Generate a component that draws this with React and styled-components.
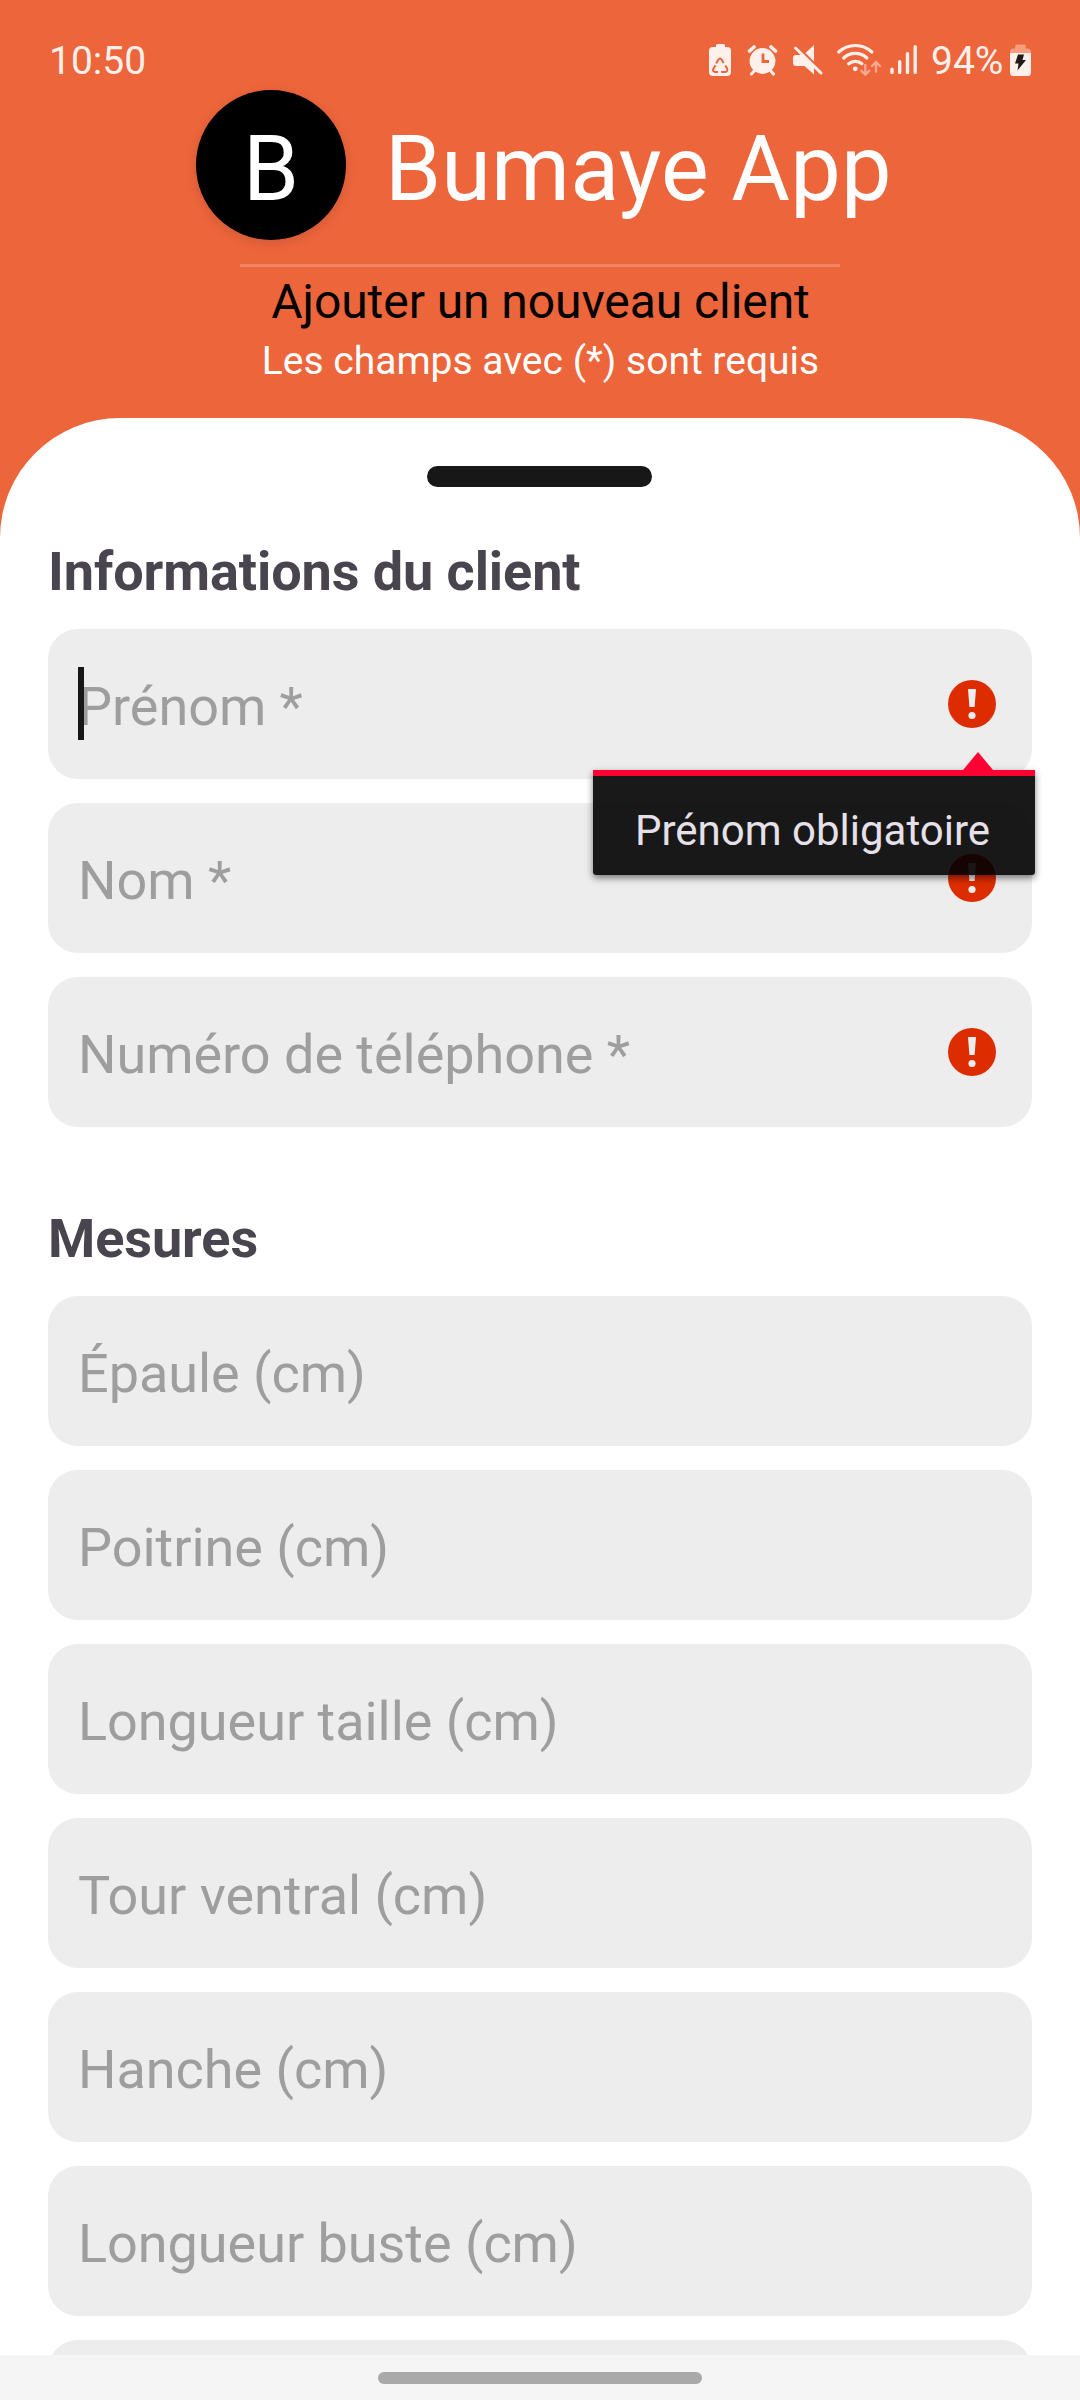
import React from "react";
import styled, { createGlobalStyle } from "styled-components";

const GlobalStyle = createGlobalStyle`
  * { box-sizing: border-box; }
  body {
    margin: 0;
    background: #ed653b;
    font-family: Roboto, "Liberation Sans", sans-serif;
  }
`;

const Screen = styled.div`
  width: 1080px;
  height: 2400px;
  display: flex;
  flex-direction: column;
  overflow: hidden;
  background: #ed653b;
`;

const StatusBar = styled.div`
  height: 90px;
  flex: none;
  display: flex;
  justify-content: space-between;
  padding: 38px 47px 0 49px;
  color: #fff0eb;
  font-size: 39px;
  line-height: 46px;
`;

const StatusIcons = styled.div`
  display: flex;
  align-items: flex-start;
`;

const StatusGlyphs = styled.svg`
  display: block;
  width: 222px;
  height: 46px;
`;

const BatteryLevel = styled.span`
  width: 73px;
  margin-left: 2px;
`;

const BatteryGlyph = styled.svg`
  display: block;
  width: 24px;
  height: 46px;
  margin-left: 5px;
`;

const Brand = styled.div`
  display: flex;
  gap: 39px;
  height: 150px;
  flex: none;
  padding-left: 196px;
`;

const Logo = styled.div`
  width: 150px;
  height: 150px;
  padding-top: 9px;
  border-radius: 50%;
  background: #000;
  box-shadow: 0 3px 12px rgba(0, 0, 0, 0.12);
  color: #fff;
  font-size: 90px;
  line-height: 142px;
  text-align: center;
`;

const Title = styled.h1`
  margin: 0;
  padding-top: 9px;
  color: #fff;
  font-size: 90px;
  font-weight: 400;
  letter-spacing: 0.2px;
  line-height: 142px;
  white-space: nowrap;
`;

const Divider = styled.div`
  width: 600px;
  height: 3px;
  flex: none;
  margin: 24px auto 7px;
  background: #f28360;
`;

const Subtitle = styled.div`
  flex: none;
  padding-left: 1px;
  color: #000;
  font-size: 48px;
  letter-spacing: -0.07px;
  line-height: 56px;
  text-align: center;
`;

const Hint = styled.div`
  flex: none;
  margin-top: 8px;
  padding-left: 1px;
  color: #fff;
  font-size: 39px;
  line-height: 46px;
  text-align: center;
`;

const Sheet = styled.main`
  flex: 1;
  min-height: 0;
  margin-top: 34px;
  padding: 48px 48px 0;
  overflow: hidden;
  border-radius: 120px 120px 0 0;
  background: #fff;
`;

const Handle = styled.div`
  width: 225px;
  height: 21px;
  margin: 0 0 53px 379px;
  border-radius: 10.5px;
  background: #171717;
`;

const Section = styled.section`
  display: flex;
  flex-direction: column;
  gap: 24px;
  margin-bottom: 80px;
`;

const SectionTitle = styled.h2`
  margin: 0 0 1px;
  color: #49454f;
  font-size: 54px;
  font-weight: 700;
  letter-spacing: -0.08px;
  line-height: 64px;
`;

const Field = styled.div`
  position: relative;
  display: flex;
  align-items: center;
  justify-content: space-between;
  height: 150px;
  flex: none;
  padding: 0 36px 0 30px;
  border-radius: 30px;
  background: #ededed;
`;

const Placeholder = styled.span`
  padding-top: 5px;
  color: #9e9e9e;
  font-size: 54px;
  letter-spacing: -0.04px;
  line-height: 64px;
  white-space: nowrap;
`;

const Caret = styled.span`
  position: absolute;
  left: 30px;
  top: 38px;
  width: 6px;
  height: 73px;
  background: #171717;
`;

const ErrorMark = styled.svg`
  display: block;
  width: 48px;
  height: 48px;
`;

const Tooltip = styled.div`
  position: absolute;
  z-index: 1;
  top: 141px;
  right: -3px;
  width: 442px;
  height: 105px;
  padding: 0 0 0 42px;
  border-top: 6px solid #ff0033;
  border-radius: 0 0 3px 3px;
  background: rgba(0, 0, 0, 0.9);
  background-clip: padding-box;
  box-shadow: 0 3px 7px rgba(0, 0, 0, 0.5);
  color: #e6e0e9;
  font-size: 42px;
  line-height: 109px;
  white-space: nowrap;

  &::before {
    content: "";
    position: absolute;
    top: -24px;
    right: 42px;
    border: 15px solid transparent;
    border-top: 0;
    border-bottom: 18px solid #ff0033;
  }
`;

const NavBar = styled.div`
  display: flex;
  justify-content: center;
  height: 45px;
  flex: none;
  padding-top: 17px;
  background: #f5f5f5;
`;

const NavPill = styled.div`
  width: 324px;
  height: 12px;
  border-radius: 6px;
  background: #a9a9a9;
`;

const clientFields = [
  { label: "Prénom *", focused: true, error: "Prénom obligatoire" },
  { label: "Nom *" },
  { label: "Numéro de téléphone *" },
];

const measureFields = [
  "Épaule (cm)",
  "Poitrine (cm)",
  "Longueur taille (cm)",
  "Tour ventral (cm)",
  "Hanche (cm)",
  "Longueur buste (cm)",
  "",
];

function ErrorIcon() {
  return (
    <ErrorMark viewBox="0 0 48 48">
      <circle cx="24" cy="24" r="24" fill="#dd2c00" />
      <path d="M20 9h8l-1.4 18h-5.2z" fill="#ededed" />
      <circle cx="24" cy="35.5" r="3.6" fill="#ededed" />
    </ErrorMark>
  );
}

function SystemIcons() {
  return (
    <StatusGlyphs viewBox="707 38 222 46" fill="#fff0eb">
      {/* battery care */}
      <path d="M716 47v-1.500q0-1.500 1.500-1.500h6q1.500 0 1.500 1.500v1.500h2.500q3.500 0 3.500 3.500v21.500q0 4-4 4h-14q-4 0-4-4v-21.500q0-3.500 3.500-3.500z" />
      <g fill="none" stroke="#ed653b" strokeWidth="2" strokeLinejoin="round">
        <path d="M716.200 63.500l1.900-3.600q1.900-2.600 3.800 0l1.700 3" />
        <path d="M725.300 65.500l1.800 3q1 3.500-2 3.500h-4" />
        <path d="M718 72h-3q-3-0.500-1.500-3.500l2-3.200" />
      </g>
      {/* alarm */}
      <g fill="none" stroke="#fff0eb" strokeLinecap="round">
        <path d="M749.500 51l4.500-4M775.500 51l-4.500-4" strokeWidth="3.600" />
        <path d="M755 70l-3.500 4M770 70l3.500 4" strokeWidth="3" />
      </g>
      <circle cx="762.500" cy="61" r="12.900" />
      <path d="M763 53.500v8h6" fill="none" stroke="#ed653b" strokeWidth="2.800" />
      {/* muted speaker */}
      <path d="M796 55h6l12 12v7.500l-9.500-8.500h-8.500q-3 0-3-3v-5q0-3 3-3z" />
      <path d="M805.500 53l8.500-8v16.500z" />
      <path d="M795.500 48l25.500 25" stroke="#fff0eb" strokeWidth="3" strokeLinecap="round" />
      {/* wifi */}
      <g fill="none" stroke="#fff0eb" strokeWidth="3.200" strokeLinecap="round">
        <path d="M838.700 52a24.500 24.500 0 0 1 33.200 0" />
        <path d="M843.700 58a17 17 0 0 1 23.200 0" />
        <path d="M848.700 63.800a10 10 0 0 1 13.200 0" />
      </g>
      <circle cx="855.300" cy="68.800" r="2.400" />
      <g fill="none" stroke="#f9a78e" strokeWidth="2.400" strokeLinecap="round" strokeLinejoin="round">
        <path d="M865.300 65v9.500M861.300 70.700l4 4 4-4" />
        <path d="M876 71.500v-9.500M872 66l4-4 4 4" />
      </g>
      {/* signal */}
      <path
        d="M892 69.200v3.200M899.700 61.700v10.700M907.500 53.700v18.700M915.200 46.700v25.700"
        stroke="#fff0eb"
        strokeWidth="3.400"
        strokeLinecap="round"
      />
    </StatusGlyphs>
  );
}

function ChargingBattery() {
  return (
    <BatteryGlyph viewBox="1009 38 24 46">
      <path d="M1010 54v-2q0-3.500 3.500-3.500h1.700v-2.500q0-1.500 1.500-1.500h7.600q1.500 0 1.500 1.500v2.500h1.700q3.500 0 3.500 3.500v2z" fill="#f89c80" />
      <path d="M1010 59v-6h21v19.500q0 3.500-3.500 3.500h-14q-3.500 0-3.500-3.500z" fill="#fff0eb" />
      <path d="M1018 54.500h6l-1.500 5.500h3.500l-8.500 10.500 1-7h-3.500z" fill="#221b19" />
    </BatteryGlyph>
  );
}

export default function App() {
  return (
    <Screen>
      <GlobalStyle />
      <StatusBar>
        <span>10:50</span>
        <StatusIcons>
          <SystemIcons />
          <BatteryLevel>94%</BatteryLevel>
          <ChargingBattery />
        </StatusIcons>
      </StatusBar>
      <Brand>
        <Logo>B</Logo>
        <Title>Bumaye App</Title>
      </Brand>
      <Divider />
      <Subtitle>Ajouter un nouveau client</Subtitle>
      <Hint>Les champs avec (*) sont requis</Hint>
      <Sheet>
        <Handle />
        <Section>
          <SectionTitle>Informations du client</SectionTitle>
          {clientFields.map((f) => (
            <Field key={f.label}>
              <Placeholder>{f.label}</Placeholder>
              {f.focused && <Caret />}
              <ErrorIcon />
              {f.error && <Tooltip>{f.error}</Tooltip>}
            </Field>
          ))}
        </Section>
        <Section>
          <SectionTitle>Mesures</SectionTitle>
          {measureFields.map((label) => (
            <Field key={label}>
              <Placeholder>{label}</Placeholder>
            </Field>
          ))}
        </Section>
      </Sheet>
      <NavBar>
        <NavPill />
      </NavBar>
    </Screen>
  );
}
